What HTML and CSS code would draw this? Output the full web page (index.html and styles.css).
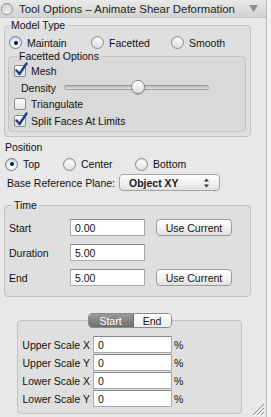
FILE: index.html
```html
<!DOCTYPE html>
<html lang="en">
<head>
    <meta charset="UTF-8">
    <title>Tool Options - Animate Shear Deformation</title>
    <link rel="stylesheet" href="styles.css">
</head>
<body>
    <div class="window">
        <div class="titlebar">
            <span class="title-dot"></span>
            <span class="title">Tool Options – Animate Shear Deformation</span>
            <svg class="title-menu" width="9" height="7" viewBox="0 0 9 7"><path d="M0 0H9L4.5 7Z" fill="#8e8e8e"/></svg>
        </div>

        <div class="panel">
            <fieldset class="group model-type">
                <legend>Model Type</legend>
                <div class="radio-row model-row">
                    <label class="radio"><span class="radio-btn checked"></span>Maintain</label>
                    <label class="radio"><span class="radio-btn"></span>Facetted</label>
                    <label class="radio"><span class="radio-btn"></span>Smooth</label>
                </div>

                <fieldset class="group facetted">
                    <legend>Facetted Options</legend>
                    <label class="check-row">
                        <span class="checkbox"><svg width="14" height="15" viewBox="0 0 14 15"><path d="M2.5 8.5L5.5 12L12.5 1.5" fill="none" stroke="#1f3f8a" stroke-width="2.4" stroke-linecap="round" stroke-linejoin="round"/></svg></span>Mesh
                    </label>
                    <div class="density-row">
                        <span class="density-label">Density</span>
                        <div class="slider"><span class="knob"></span></div>
                    </div>
                    <label class="check-row">
                        <span class="checkbox"></span>Triangulate
                    </label>
                    <label class="check-row last">
                        <span class="checkbox"><svg width="14" height="15" viewBox="0 0 14 15"><path d="M2.5 8.5L5.5 12L12.5 1.5" fill="none" stroke="#1f3f8a" stroke-width="2.4" stroke-linecap="round" stroke-linejoin="round"/></svg></span>Split Faces At Limits
                    </label>
                </fieldset>
            </fieldset>

            <div class="section-label">Position</div>
            <div class="radio-row position-row">
                <label class="radio"><span class="radio-btn checked"></span>Top</label>
                <label class="radio"><span class="radio-btn"></span>Center</label>
                <label class="radio"><span class="radio-btn"></span>Bottom</label>
            </div>

            <div class="plane-row">
                <span class="plane-label">Base Reference Plane:</span>
                <div class="select">
                    <span>Object XY</span>
                    <svg width="7" height="10" viewBox="0 0 7 10"><path d="M3.5 0.5L6 3.5H1Z M3.5 9.5L6 6.5H1Z" fill="#333"/></svg>
                </div>
            </div>

            <fieldset class="group time">
                <legend>Time</legend>
                <div class="time-row">
                    <span>Start</span>
                    <input class="field" type="text" value="0.00">
                    <button>Use Current</button>
                </div>
                <div class="time-row">
                    <span>Duration</span>
                    <input class="field" type="text" value="5.00">
                </div>
                <div class="time-row">
                    <span>End</span>
                    <input class="field" type="text" value="5.00">
                    <button>Use Current</button>
                </div>
            </fieldset>

            <fieldset class="group scale">
                <legend class="tabs">
                    <span class="tab active">Start</span>
                    <span class="tab">End</span>
                </legend>
                <div class="scale-row">
                    <span>Upper Scale X</span>
                    <input class="field" type="text" value="0">
                    <span class="pct">%</span>
                </div>
                <div class="scale-row">
                    <span>Upper Scale Y</span>
                    <input class="field" type="text" value="0">
                    <span class="pct">%</span>
                </div>
                <div class="scale-row">
                    <span>Lower Scale X</span>
                    <input class="field" type="text" value="0">
                    <span class="pct">%</span>
                </div>
                <div class="scale-row">
                    <span>Lower Scale Y</span>
                    <input class="field" type="text" value="0">
                    <span class="pct">%</span>
                </div>
            </fieldset>
        </div>

        <svg class="grip" width="13" height="13" viewBox="0 0 13 13">
            <path d="M12 1L1 12M12 5L5 12M12 9L9 12" stroke="#8a8a8a" stroke-width="1"/>
            <path d="M13 2L2 13M13 6L6 13M13 10L10 13" stroke="#fafafa" stroke-width="1"/>
        </svg>
    </div>
</body>
</html>
```

FILE: styles.css
```css
body {
    margin: 0;
    font-family: "Liberation Sans", Arial, sans-serif;
    font-size: 10.5px;
    color: #111;
    background-color: #f3f3f3;
}
.window {
    position: relative;
    width: 267px;
    height: 417px;
    box-sizing: border-box;
    background-color: #e8e8e8;
    border-right: 1px solid #b8b8b8;
    overflow: hidden;
}
.titlebar {
    display: flex;
    align-items: center;
    height: 17px;
    padding-left: 1px;
    background: linear-gradient(#e9e9e9, #d2d2d2);
    border-bottom: 1px solid #c4c4c4;
}
.title-dot {
    width: 10px;
    height: 10px;
    border: 1px solid #8f8f8f;
    border-radius: 50%;
    background: linear-gradient(#cfcfcf, #f4f4f4);
}
.title {
    margin-left: 6px;
    font-size: 11.4px;
    color: #222;
    white-space: nowrap;
}
.title-menu {
    margin-left: auto;
    margin-right: 8px;
}
.panel {
    padding: 1px 0 0 4px;
}

/* group boxes */
.group {
    margin: 0;
    padding: 0;
    min-width: 0;
    border: 1px solid #c3c3c3;
    border-radius: 4px;
    background-color: #dfdfdf;
}
.group legend {
    padding: 0 2px;
    margin-left: 4px;
    line-height: 13px;
}
.model-type {
    width: 247px;
    box-sizing: border-box;
    padding-bottom: 4px;
}
.facetted {
    margin: 0 4px 0 3px;
    padding: 0 0 2px 5px;
    background-color: #d9d9d9;
}
.facetted legend {
    margin-left: 3px;
}

/* radios */
.radio-row {
    display: flex;
    height: 15px;
    align-items: center;
}
.model-row {
    margin-top: 3px;
    padding-left: 4px;
}
.model-row .radio:nth-child(1) { width: 82px; }
.model-row .radio:nth-child(2) { width: 80px; }
.radio {
    display: flex;
    align-items: center;
    gap: 5px;
}
.radio-btn {
    width: 11px;
    height: 11px;
    border: 1px solid #8c8c8c;
    border-radius: 50%;
    background: linear-gradient(#ffffff, #dedede);
    box-shadow: inset 0 1px 1px rgba(0,0,0,0.12);
    position: relative;
}
.radio-btn.checked {
    background: radial-gradient(circle at 50% 70%, #ffffff, #c6d9ee);
    border-color: #6f7f94;
}
.radio-btn.checked::after {
    content: "";
    position: absolute;
    left: 3.5px;
    top: 3.5px;
    width: 4px;
    height: 4px;
    border-radius: 50%;
    background-color: #1a1a1a;
}

/* checkboxes */
.check-row {
    display: flex;
    align-items: center;
    gap: 5px;
    height: 16px;
}
.check-row.last {
    height: 17px;
}
.checkbox {
    position: relative;
    width: 10px;
    height: 10px;
    border: 1px solid #8a8a8a;
    border-radius: 2px;
    background: linear-gradient(#ffffff, #e2e2e2);
}
.checkbox svg {
    position: absolute;
    left: -1px;
    top: -4px;
}
.density-row {
    display: flex;
    align-items: center;
    height: 17px;
}
.density-label {
    width: 43px;
    padding-left: 7px;
}
.slider {
    position: relative;
    width: 143px;
    height: 3px;
    border: 1px solid #9a9a9a;
    border-radius: 3px;
    background: linear-gradient(#b8b8b8, #e4e4e4);
}
.knob {
    position: absolute;
    left: 66px;
    top: -6px;
    width: 12px;
    height: 12px;
    border: 1px solid #8a8a8a;
    border-radius: 50%;
    background: linear-gradient(#ffffff, #dcdcdc);
    box-shadow: 0 1px 1px rgba(0,0,0,0.2);
}

/* position */
.section-label {
    margin-top: 3px;
    padding-left: 1px;
    line-height: 14px;
}
.position-row {
    margin-top: 3px;
    height: 14px;
    padding-left: 1px;
}
.position-row .radio:nth-child(1) { width: 58px; }
.position-row .radio:nth-child(2) { width: 72px; }
.plane-row {
    display: flex;
    align-items: center;
    margin-top: 3px;
    height: 17px;
}
.plane-label {
    width: 112px;
    padding-left: 3px;
}
.select {
    display: flex;
    align-items: center;
    justify-content: space-between;
    width: 101px;
    height: 17px;
    box-sizing: border-box;
    padding: 0 9px 0 9px;
    border: 1px solid #a2a2a2;
    border-radius: 4px;
    background: linear-gradient(#ffffff, #f1f1f1 50%, #e2e2e2);
    font-weight: bold;
    color: #1a1a1a;
}

/* time */
.time {
    width: 247px;
    box-sizing: border-box;
    margin-top: 8px;
    padding: 7px 0 10px 4px;
}
.time legend {
    margin-left: 3px;
}
.time-row {
    display: grid;
    grid-template-columns: 61px 75px 87px;
    align-items: center;
    height: 17px;
    margin-bottom: 8px;
}
.time-row:last-child {
    margin-bottom: 0;
}
.time-row button {
    margin-left: 11px;
}
.field {
    height: 17px;
    box-sizing: border-box;
    margin: 0;
    padding: 1px 0 0 4px;
    border: 1px solid #a9a9a9;
    border-top-color: #888;
    background-color: white;
    font-family: inherit;
    font-size: 10.5px;
    color: #111;
    outline: none;
}
.time .field {
    width: 75px;
}
button {
    height: 17px;
    margin: 0;
    padding: 0;
    border: 1px solid #9a9a9a;
    border-radius: 4px;
    background: linear-gradient(#ffffff, #f3f3f3 50%, #e1e1e1);
    font-family: inherit;
    font-size: 10.5px;
    color: #111;
}

/* start / end tabs */
.scale {
    width: 225px;
    box-sizing: border-box;
    margin: 16px 0 0 13px;
    padding: 8px 0 5px 0;
}
.scale legend.tabs {
    display: flex;
    margin: 0 auto;
    padding: 0;
    height: 15px;
    line-height: 13px;
    border: 1px solid #8c8c8c;
    border-radius: 4px;
    overflow: hidden;
    box-sizing: border-box;
}
.tab {
    padding-top: 1px;
    text-align: center;
    background: linear-gradient(#ffffff, #ececec);
}
.tab.active {
    width: 44px;
    color: white;
    background: linear-gradient(#9a9a9a, #6e6e6e);
    border-right: 1px solid #6a6a6a;
}
.tab:last-child {
    width: 37px;
}
.scale-row {
    display: grid;
    grid-template-columns: 75px 79px auto;
    align-items: center;
    height: 17px;
    margin-bottom: 1px;
}
.scale-row > span:first-child {
    text-align: right;
    padding-right: 3px;
}
.scale-row .field {
    width: 79px;
}
.pct {
    padding-left: 2px;
}
.grip {
    position: absolute;
    right: 1px;
    bottom: 1px;
}
```
